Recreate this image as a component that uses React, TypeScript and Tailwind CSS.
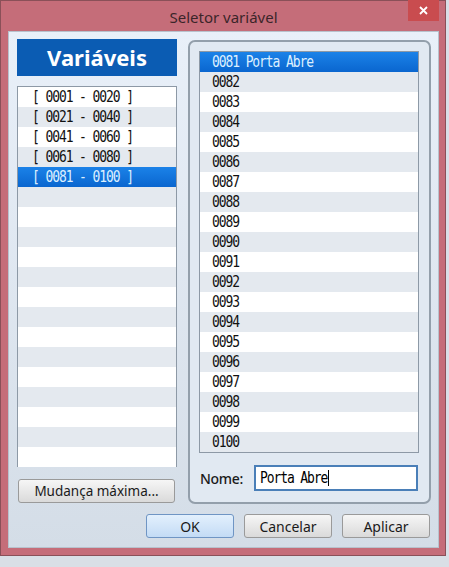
import { useState } from "react";

const ui = "font-['Noto_Sans','Open_Sans',sans-serif]";
const mono = "font-['DejaVu_Sans_Mono','Liberation_Mono',monospace]";

const groups = ["0001 - 0020", "0021 - 0040", "0041 - 0060", "0061 - 0080", "0081 - 0100"];

const vars = Array.from({ length: 20 }, (_, i) => {
  const n = String(81 + i).padStart(4, "0");
  return i === 0 ? `${n} Porta Abre` : n;
});

function Row({ text, index, selected, pad }: { text: string; index: number; selected: boolean; pad: string }) {
  const bg = selected
    ? "bg-gradient-to-b from-[#1b82e8] to-[#0a66cf] text-[#dcefff]"
    : index % 2 === 1
      ? "bg-[#e4e9ef] text-[#111]"
      : "bg-white text-[#111]";
  return (
    <div className={`h-[20px] flex items-center ${pad} ${bg}`}>
      <span className={`inline-block scale-y-[1.18] ${mono} text-[13px] tracking-[-1.1px] whitespace-pre`}>{text}</span>
    </div>
  );
}

function Button({ label, primary, className }: { label: string; primary?: boolean; className?: string }) {
  return (
    <button
      className={`h-[24px] rounded-[3px] border text-[#1a1a1a] flex items-center justify-center ${
        primary
          ? "border-[#6f95c4] bg-gradient-to-b from-[#e3f0fd] to-[#c3dbf5]"
          : "border-[#9a9a9a] bg-gradient-to-b from-[#f6f6f6] to-[#dadada]"
      } ${className ?? ""}`}
    >
      {label}
    </button>
  );
}

export default function App() {
  const [group, setGroup] = useState(4);
  const [sel, setSel] = useState(0);

  return (
    <div className={`w-[449px] h-[567px] bg-[#d9dfe6] overflow-hidden ${ui}`}>
      <div className="w-[446px] h-[556px] border border-[#8a5058] bg-[#c56d79] flex flex-col pl-[7px] pr-[6px] pb-[7px]">
        {/* title bar */}
        <div className="relative h-[30px] flex items-center justify-center">
          <span className="text-[15px] text-[#3b2529] pt-[2px]">Seletor variável</span>
          <div className="absolute right-[0px] top-[-1px] w-[31px] h-[21px] bg-[#c94c4f] flex items-center justify-center">
            <svg width="9" height="9" viewBox="0 0 9 9">
              <path d="M1 1 L8 8 M8 1 L1 8" stroke="white" strokeWidth="1.8" />
            </svg>
          </div>
        </div>

        {/* client area */}
        <div className="h-[517px] border border-[#b8c2cd] bg-gradient-to-b from-[#e9f0f9] to-[#d4dde7] flex flex-col pl-[8px] pr-[7px] pt-[7px]">
          <div className="flex gap-[11px]">
            {/* left column */}
            <div className="w-[160px] flex flex-col">
              <div className="h-[37px] bg-[#0b5cb3] flex items-center justify-center text-white text-[22px] font-bold">
                Variáveis
              </div>
              <div className="mt-[10px] h-[381px] border border-[#8d99a6] bg-white">
                {Array.from({ length: 19 }, (_, i) => (
                  <div key={i} onClick={() => i < groups.length && setGroup(i)}>
                    <Row
                      text={i < groups.length ? `[ ${groups[i]} ]` : ""}
                      index={i}
                      selected={i === group}
                      pad="pl-[14px]"
                    />
                  </div>
                ))}
              </div>
              <Button label="Mudança máxima..." className="mt-[12px] ml-[1px] w-[157px] text-[13.5px]" />
            </div>

            {/* right group box */}
            <div className="mt-[1px] w-[243px] h-[464px] rounded-[7px] border-2 border-[#939fab] bg-[#e1e9f2] pt-[9px] px-[9px] flex flex-col">
              <div className="h-[402px] w-[220px] border border-[#8d99a6] bg-white">
                {vars.map((v, i) => (
                  <div key={v} onClick={() => setSel(i)}>
                    <Row text={v} index={i} selected={i === sel} pad="pl-[12px]" />
                  </div>
                ))}
              </div>
              <div className="mt-[12px] flex items-center">
                <span className="w-[55px] pl-[1px] text-[14px] font-medium tracking-[-0.3px] text-[#1a1a1a]">Nome:</span>
                <div className="w-[164px] h-[26px] border-2 border-[#4a7fb8] bg-white flex items-center pl-[4px]">
                  <span className={`inline-block scale-y-[1.18] ${mono} text-[13px] tracking-[-1.1px] text-black`}>Porta Abre</span>
                  <span className="ml-[1px] w-[1px] h-[16px] bg-black" />
                </div>
              </div>
            </div>
          </div>

          {/* bottom buttons */}
          <div className="mt-[10px] flex justify-end gap-[10px] pr-[1px] text-[14px]">
            <Button label="OK" primary className="w-[88px]" />
            <Button label="Cancelar" className="w-[88px]" />
            <Button label="Aplicar" className="w-[88px]" />
          </div>
        </div>
      </div>
    </div>
  );
}
